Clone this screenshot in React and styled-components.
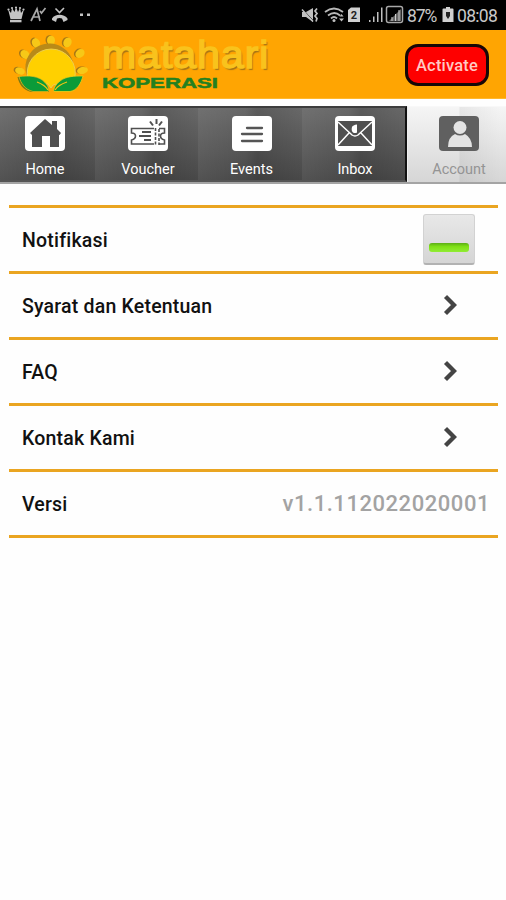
import React from 'react'
import styled, { createGlobalStyle } from 'styled-components'

const tabs = [
  { name: 'Home', icon: <HomeIcon />, spacing: '0' },
  { name: 'Voucher', icon: <VoucherIcon />, spacing: '0' },
  { name: 'Events', icon: <EventsIcon />, spacing: '0' },
  { name: 'Inbox', icon: <InboxIcon />, spacing: '-0.1px' },
  { name: 'Account', icon: <AccountIcon />, spacing: '0', active: true },
]

const links = ['Syarat dan Ketentuan', 'FAQ', 'Kontak Kami']

export default function App() {
  return (
    <Screen>
      <GlobalStyle />
      <StatusBar>
        <StatusLeft />
        <StatusRight>
          <StatusIcons />
          <Battery>87%</Battery>
          <BatteryIcon />
          <Clock>08:08</Clock>
        </StatusRight>
      </StatusBar>
      <Header>
        <Brand>
          <SunLogo />
          <BrandText>
            <BrandName>matahari</BrandName>
            <BrandSub>KOPERASI</BrandSub>
          </BrandText>
        </Brand>
        <Activate>Activate</Activate>
      </Header>
      <TabBar>
        {tabs.map((tab) => (
          <Tab key={tab.name} $active={tab.active}>
            {tab.icon}
            <TabLabel $active={tab.active} $spacing={tab.spacing}>{tab.name}</TabLabel>
          </Tab>
        ))}
      </TabBar>
      <List>
        <Row>
          <Label>Notifikasi</Label>
          <Toggle><ToggleBar /></Toggle>
        </Row>
        {links.map((link) => (
          <Row key={link}>
            <Label>{link}</Label>
            <Chevron />
          </Row>
        ))}
        <Row>
          <Label>Versi</Label>
          <Version>v1.1.112022020001</Version>
        </Row>
      </List>
    </Screen>
  )
}

function StatusLeft() {
  return (
    <svg width="100" height="30" viewBox="0 0 100 30" fill="#c4c4c4">
      {/* crown */}
      <path d="M8 9l3 4 1-5 2.500 4 1.500-5 2 5 2-4 1 5 3-4-2.500 10H10.500z" />
      <circle cx="8.500" cy="9.500" r="1.100" />
      <circle cx="12" cy="8" r="1.100" />
      <circle cx="16" cy="7.500" r="1.100" />
      <circle cx="20" cy="8" r="1.100" />
      <circle cx="23.500" cy="9.500" r="1.100" />
      <path d="M10 19.800h11.500v2.500H10z" />
      {/* letter A with a tick */}
      <path d="M31 21l6-12 3 12M33 17h7M40 11l1.500 2 4-5" fill="none" stroke="#a8a8a8" strokeWidth="1.700" />
      {/* missed call */}
      <path d="M55.500 8.500l4 4 4.500-4.500" fill="none" stroke="#c4c4c4" strokeWidth="1.600" />
      <path d="M52 18.500c3-5 12-5 15.500 0v1.500l-4 2-1.500-3.500q-2.500-1-5 0L56 22l-4-2z" />
      <path d="M80 13.500h3v2.500h-3zM87 13.500h3v2.500h-3z" />
    </svg>
  )
}

function StatusIcons() {
  return (
    <svg width="109" height="30" viewBox="296 0 109 30" fill="#c0c0c0">
      <path d="M303 12h4l7-4v14l-7-5h-4z" />
      <path d="M303 8.500l12 13" fill="none" stroke="#000" strokeWidth="1" />
      <path d="M303 9.500l11 12" fill="none" stroke="#c0c0c0" strokeWidth="1.500" />
      <path d="M318 8.500l-2 2.500 2 2.500-2 2.500 2 2.500-1 3" fill="none" stroke="#c0c0c0" strokeWidth="1.700" />
      <g fill="none" stroke="#b8b8b8" strokeWidth="1.800">
        <path d="M326 12q9-7 18 0M329 15.500q6.500-5 12 0M332 18.500q3-3 6 0" />
      </g>
      <circle cx="335" cy="20.500" r="1.500" />
      <path d="M340.500 16.500l2-2.500 2 2.500zM340 18.500h5l-2.500 3z" />
      <path d="M349 10l3-2.500h9V22h-12z" fill="#d0d0d0" />
      <text x="355" y="19" textAnchor="middle" fill="#222" fontFamily="Roboto, sans-serif" fontWeight="700" fontSize="11">2</text>
      <path d="M370 20h1.500v2H370zM374 16.500h1.500V22H374zM378 12h1.500v10H378zM382 7.500h1.500V22H382z" />
      <rect x="387.500" y="6.500" width="16" height="16" rx="2" fill="none" stroke="#a8a8a8" strokeWidth="1.500" />
      <path d="M390 21l12-12v12z" fill="#666" />
      <path d="M393 17v4M396.500 14v7M400 10v11" stroke="#ccc" strokeWidth="1" />
    </svg>
  )
}

function BatteryIcon() {
  return (
    <svg width="12" height="16" viewBox="0 0 12 16">
      <path d="M4 0h4v1.500h2.500q1 0 1 1V15H.5V2.500q0-1 1-1H4z" fill="#d0d0d0" />
      <path d="M4 5h4v4l-2 3-2-3z" fill="#222" />
    </svg>
  )
}

function SunLogo() {
  return (
    <svg width="78" height="62" viewBox="11 34 78 62">
      <g fill="#a87816" transform="translate(-1.500 -.5)">
        <Rays />
      </g>
      <g fill="#f7c817">
        <Rays />
      </g>
      <path d="M27 76a24 24 0 1 1 44 2z" fill="#b98a18" />
      <path d="M28 79a24 24 0 1 1 46.500 0L53 85l-2 3-3-4z" fill="#ffd000" stroke="#edcf4e" strokeWidth="1" />
      <path d="M17.500 77c8-1 21-1 27 6 4 4 5 8 4 9H31c-8-2-12-8-13.500-15z" fill="#7a7a15" />
      <path d="M19 76.500c9-1 20-1 26 6 4 4 4 8 3 9H33c-8-2-12-8-14-15z" fill="#0b9b39" stroke="#f0bd18" strokeWidth=".7" />
      <path d="M83 76c-8 0-17 0-23 5-4 3-7 8-6 10.500h16c7-1 11-8 13-15.500z" fill="#0b9b39" stroke="#f0cd18" strokeWidth=".8" />
      <path d="M37 82q8 3 11 8M67 82q-9 3-12 8" stroke="#f5c414" strokeWidth="1.300" fill="none" />
    </svg>
  )
}

function Rays() {
  return (
    <>
      <ellipse cx="20" cy="71" rx="5" ry="3.500" transform="rotate(18 20 71)" />
      <ellipse cx="25" cy="54.500" rx="5" ry="4" transform="rotate(42 25 54.500)" />
      <ellipse cx="36" cy="43" rx="4" ry="5" transform="rotate(-23 36 43)" />
      <ellipse cx="51" cy="40.500" rx="4" ry="4.800" />
      <ellipse cx="67.500" cy="42.500" rx="4" ry="5" transform="rotate(25 67.500 42.500)" />
      <ellipse cx="80" cy="53.500" rx="5" ry="4" transform="rotate(-40 80 53.500)" />
      <ellipse cx="82.500" cy="70.500" rx="5.500" ry="3.500" transform="rotate(-12 82.500 70.500)" />
    </>
  )
}

function HomeIcon() {
  return (
    <TabIcon viewBox="0 0 40 35">
      <rect width="40" height="35" rx="4" fill="#fff" />
      <path d="M5 17L20 3l7 6V5h5v8l4 4-1.500 2H34v12h-9V20h-8v11H7V19z" fill="#505050" />
    </TabIcon>
  )
}

function VoucherIcon() {
  return (
    <TabIcon viewBox="0 0 40 35">
      <rect width="40" height="35" rx="4" fill="#fff" />
      <g fill="none" stroke="#505050" strokeWidth="1.600">
        <path d="M26 12.500H3.500V17q4 0 4 3t-4 4v4H26M31 12.500h5.500V17q-4 0-4 3t4 4v4H31" />
        <path d="M27.500 12v17M31 13v16" strokeDasharray="3 1.500" />
        <path d="M14 16h9M11 20h12M16 24h7" strokeWidth="2" />
        <path d="M22 5.500l3 4M28.500 3v5M34 5.500l-3 4" strokeWidth="2" />
      </g>
    </TabIcon>
  )
}

function EventsIcon() {
  return (
    <TabIcon viewBox="0 0 40 35">
      <rect width="40" height="35" rx="4" fill="#fff" />
      <path d="M15 12h15M10 18h20M10 25h20" stroke="#555" strokeWidth="2.300" strokeLinecap="round" />
    </TabIcon>
  )
}

function InboxIcon() {
  return (
    <TabIcon viewBox="0 0 40 35">
      <rect width="40" height="35" rx="4" fill="#fff" />
      <rect x="3" y="5" width="34" height="25" fill="#505050" />
      <path d="M3 6l14 13q3 2 6 0L37 6M3 29l11-12M37 29L26 17" fill="none" stroke="#fff" strokeWidth="1.500" />
      <path d="M17 11q1-2 5-2.500v8q-2 1-4 0-2-2-1-5.500z" fill="#fff" />
    </TabIcon>
  )
}

function AccountIcon() {
  return (
    <TabIcon viewBox="0 0 40 35">
      <rect width="40" height="35" rx="4" fill="#606060" />
      <circle cx="21" cy="11.500" r="6.500" fill="#e4e4e4" />
      <path d="M9 31q0-10 7-13 5 3 10 0 7 4 7 13z" fill="#e4e4e4" />
    </TabIcon>
  )
}

function Chevron() {
  return (
    <ChevronSvg viewBox="0 0 14 22">
      <path d="M2.500 2.500L11 11l-8.500 8.500" fill="none" stroke="#444" strokeWidth="4.300" />
    </ChevronSvg>
  )
}

const GlobalStyle = createGlobalStyle`
  body {
    margin: 0;
    background: #fefefe;
    font-family: Roboto, "Liberation Sans", sans-serif;
  }
  svg {
    display: block;
    flex-shrink: 0;
  }
`;
const Screen = styled.div`
  width: 506px;
  height: 900px;
  overflow: hidden;
  background: #fefefe;
`;
const StatusBar = styled.div`
  display: flex;
  justify-content: space-between;
  height: 30px;
  background: #000;
`;
const StatusRight = styled.div`
  display: flex;
  align-items: center;
  padding-right: 8px;
  color: #c8c8c8;
  font-size: 17.5px;
`;
const Battery = styled.span`
  width: 38px;
  padding-left: 3px;
  box-sizing: border-box;
  white-space: nowrap;
  letter-spacing: -1.1px;
  margin-top: 1px;
`;
const Clock = styled.span`
  width: 41px;
  margin: 1px 0 0 3px;
  letter-spacing: -0.7px;
`;
const Header = styled.header`
  display: flex;
  justify-content: space-between;
  height: 69px;
  box-sizing: border-box;
  padding: 4px 17px 0 11px;
  background: #ffa502;
  border-bottom: 1px solid #ffb72c;
`;
const Brand = styled.div`
  display: flex;
`;
const BrandText = styled.div`
  margin-left: 13px;
`;
const BrandName = styled.div`
  height: 42px;
  line-height: 43px;
  color: #f9c31c;
  font-family: "Liberation Sans", Arial, sans-serif;
  font-size: 38px;
  letter-spacing: 0.9px;
  -webkit-text-stroke: 1.4px #f9c31c;
  text-shadow: 1.5px 2px 1px #a47516;
  transform: scaleX(1.08);
  transform-origin: left;
`;
const BrandSub = styled.div`
  width: max-content;
  height: 14px;
  line-height: 14px;
  color: #238020;
  font-family: "Liberation Sans", Arial, sans-serif;
  font-size: 15px;
  font-weight: 700;
  -webkit-text-stroke: 0.5px #238020;
  transform: scaleX(1.48);
  transform-origin: left;
`;
const Activate = styled.button`
  width: 84px;
  height: 42px;
  margin-top: 10px;
  padding: 0;
  border: 3px solid #170707;
  border-radius: 13px;
  background: #fe0000;
  color: #ffc9c4;
  font-family: inherit;
  font-size: 16.5px;
  font-weight: 500;
  letter-spacing: 0.2px;
`;
const TabBar = styled.nav`
  display: grid;
  grid-template-columns: 95px 103px 104px 105px 99px;
  height: 78px;
  margin-top: 7px;
  box-sizing: border-box;
  border-bottom: 2px solid #a4a4a4;
`;
const Tab = styled.div`
  display: flex;
  flex-direction: column;
  align-items: center;
  box-sizing: border-box;
  padding-top: ${(p) => (p.$active ? '9px' : '8px')};
  padding-left: ${(p) => (p.$active ? '4px' : '3px')};
  border-top: ${(p) => (p.$active ? '1px solid #f8f8f8' : '2px solid #3d3d3d')};
  border-bottom: ${(p) => (p.$active ? 'none' : '2px solid #555')};
  border-left: ${(p) => (p.$active ? '1px solid #eee' : 'none')};
  background: ${(p) => (p.$active
    ? 'linear-gradient(90deg, transparent 52%, rgba(0, 0, 0, 0.06) 53%, transparent 95%), linear-gradient(#f5f5f5, #d6d6d6)'
    : 'linear-gradient(90deg, rgba(255, 255, 255, 0.06), transparent 45%, rgba(0, 0, 0, 0.12) 57%, transparent), linear-gradient(#686868, #484848)')};
  &:nth-child(4) {
    border-right: 2px solid #111;
  }
  &:first-child {
    padding-left: 0;
    padding-right: 5px;
  }
`;
const TabIcon = styled.svg`
  width: 40px;
  height: 35px;
`;
const TabLabel = styled.span`
  margin-top: 10px;
  font-size: 14.5px;
  line-height: 18px;
  letter-spacing: ${(p) => p.$spacing};
  color: ${(p) => (p.$active ? '#949494' : '#fff')};
`;
const List = styled.div`
  margin: 21px 8px 0 9px;
  border-top: 3px solid #eaa521;
`;
const Row = styled.div`
  display: flex;
  align-items: center;
  justify-content: space-between;
  height: 66px;
  box-sizing: border-box;
  padding: 0 8px 0 13px;
  border-bottom: 3px solid #eaa521;
`;
const Label = styled.span`
  padding-top: 2px;
  color: #111;
  font-size: 19.5px;
  font-weight: 500;
  letter-spacing: 0.2px;
`;
const ChevronSvg = styled.svg`
  width: 14px;
  height: 22px;
  margin: 0 33px 1px 0;
`;
const Toggle = styled.div`
  display: flex;
  justify-content: center;
  width: 52px;
  height: 51px;
  box-sizing: border-box;
  margin-right: 15px;
  padding-top: 28px;
  border: 1px solid #d2d2d2;
  border-bottom: 2px solid #b2b2b2;
  border-radius: 3px;
  background: linear-gradient(#e8e8e8, #d5d5d5);
`;
const ToggleBar = styled.div`
  width: 40px;
  height: 9px;
  border-radius: 3px;
  background: linear-gradient(#5cae16, #7fe016 40%, #91ec35);
`;
const Version = styled.span`
  color: #a3a3a3;
  font-size: 22px;
  font-weight: 500;
  letter-spacing: 0.55px;
`;
